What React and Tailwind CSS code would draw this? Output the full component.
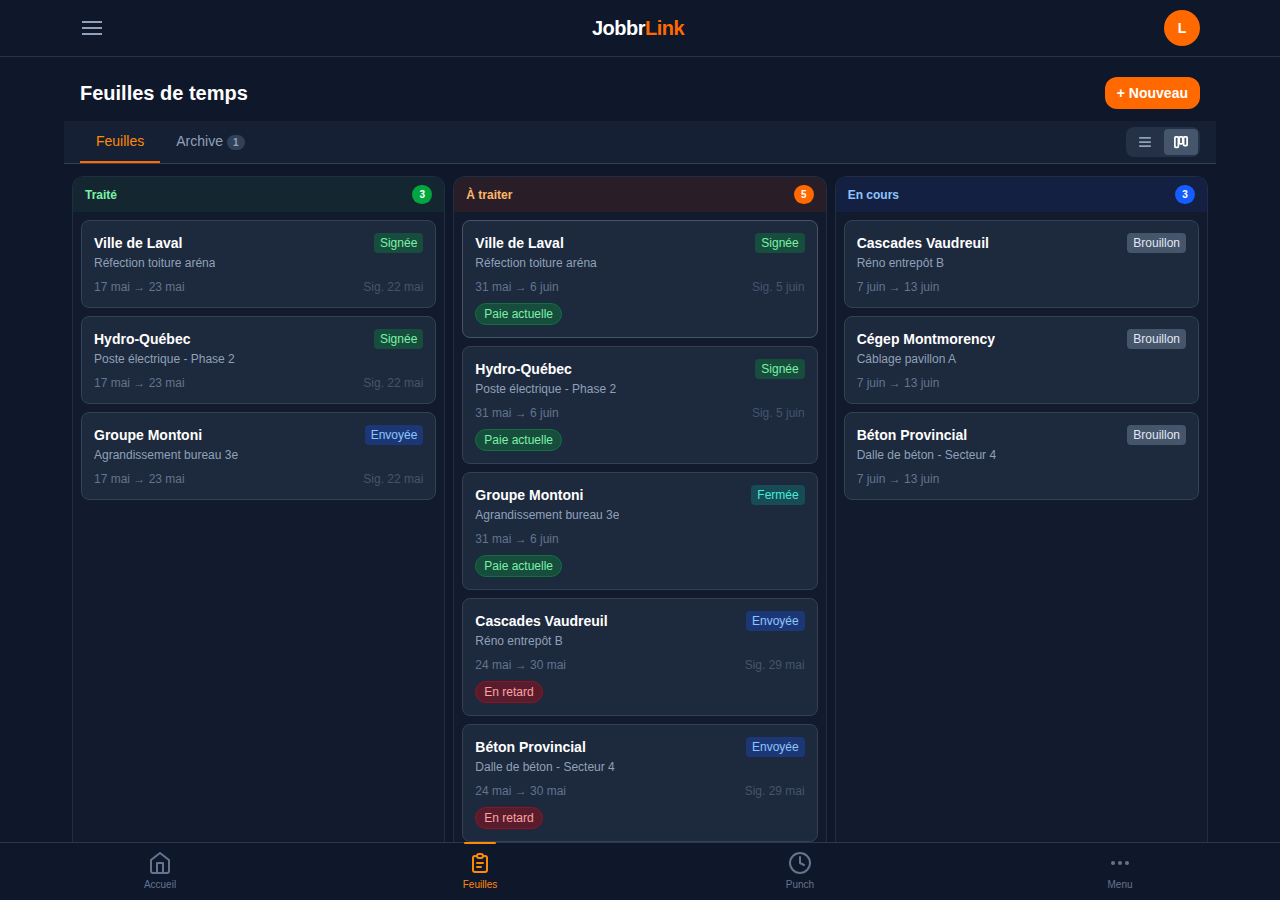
import React, { useState } from "react";

const badgeStyles = {
  Signée: "bg-[#174d3c] text-green-300",
  Envoyée: "bg-[#1c3775] text-blue-300",
  Fermée: "bg-[#174b55] text-teal-300",
  Brouillon: "bg-slate-600 text-slate-200",
};

const tagStyles = {
  "Paie actuelle": "bg-[#174d3c] border-[#0f7040] text-green-300",
  "En retard": "bg-[#581c2d] border-[#8f1420] text-red-300",
};

const columns = [
  {
    title: "Traité",
    header: "bg-[#142730] text-green-300",
    count: "bg-green-600",
    cards: [
      { client: "Ville de Laval", job: "Réfection toiture aréna", dates: "17 mai → 23 mai", status: "Signée", signed: "Sig. 22 mai" },
      { client: "Hydro-Québec", job: "Poste électrique - Phase 2", dates: "17 mai → 23 mai", status: "Signée", signed: "Sig. 22 mai" },
      { client: "Groupe Montoni", job: "Agrandissement bureau 3e", dates: "17 mai → 23 mai", status: "Envoyée", signed: "Sig. 22 mai" },
    ],
  },
  {
    title: "À traiter",
    header: "bg-[#291e27] text-orange-300",
    count: "bg-[#ff6900]",
    cards: [
      { client: "Ville de Laval", job: "Réfection toiture aréna", dates: "31 mai → 6 juin", status: "Signée", signed: "Sig. 5 juin", tag: "Paie actuelle", active: true },
      { client: "Hydro-Québec", job: "Poste électrique - Phase 2", dates: "31 mai → 6 juin", status: "Signée", signed: "Sig. 5 juin", tag: "Paie actuelle" },
      { client: "Groupe Montoni", job: "Agrandissement bureau 3e", dates: "31 mai → 6 juin", status: "Fermée", tag: "Paie actuelle" },
      { client: "Cascades Vaudreuil", job: "Réno entrepôt B", dates: "24 mai → 30 mai", status: "Envoyée", signed: "Sig. 29 mai", tag: "En retard" },
      { client: "Béton Provincial", job: "Dalle de béton - Secteur 4", dates: "24 mai → 30 mai", status: "Envoyée", signed: "Sig. 29 mai", tag: "En retard" },
    ],
  },
  {
    title: "En cours",
    header: "bg-[#142042] text-blue-300",
    count: "bg-blue-600",
    cards: [
      { client: "Cascades Vaudreuil", job: "Réno entrepôt B", dates: "7 juin → 13 juin", status: "Brouillon" },
      { client: "Cégep Montmorency", job: "Câblage pavillon A", dates: "7 juin → 13 juin", status: "Brouillon" },
      { client: "Béton Provincial", job: "Dalle de béton - Secteur 4", dates: "7 juin → 13 juin", status: "Brouillon" },
    ],
  },
];

const navItems = [
  {
    label: "Accueil",
    icon: (
      <svg className="w-6 h-6" viewBox="0 0 24 24" fill="none" stroke="currentColor" strokeWidth="2" strokeLinecap="round" strokeLinejoin="round">
        <path d="M3 9l9-7 9 7v11a2 2 0 01-2 2H5a2 2 0 01-2-2z" />
        <path d="M9 22V12h6v10" />
      </svg>
    ),
  },
  {
    label: "Feuilles",
    icon: (
      <svg className="w-6 h-6" viewBox="0 0 24 24" fill="none" stroke="currentColor" strokeWidth="2" strokeLinecap="round" strokeLinejoin="round">
        <path d="M9 5H7a2 2 0 00-2 2v12a2 2 0 002 2h10a2 2 0 002-2V7a2 2 0 00-2-2h-2" />
        <path d="M9 5a2 2 0 002 2h2a2 2 0 002-2 2 2 0 00-2-2h-2a2 2 0 00-2 2z" />
        <path d="M9 12h6M9 16h4" />
      </svg>
    ),
  },
  {
    label: "Punch",
    icon: (
      <svg className="w-6 h-6" viewBox="0 0 24 24" fill="none" stroke="currentColor" strokeWidth="2" strokeLinecap="round" strokeLinejoin="round">
        <circle cx="12" cy="12" r="10" />
        <path d="M12 6v6l4 2" />
      </svg>
    ),
  },
  {
    label: "Menu",
    icon: (
      <svg className="w-6 h-6" viewBox="0 0 24 24" fill="currentColor">
        <circle cx="5" cy="12" r="2" />
        <circle cx="12" cy="12" r="2" />
        <circle cx="19" cy="12" r="2" />
      </svg>
    ),
  },
];

const Card = ({ card }) => (
  <div
    className={`shrink-0 rounded-lg border bg-slate-800 p-3 ${
      card.active ? "border-slate-600" : "border-slate-700"
    }`}
  >
    <div className="flex items-start justify-between gap-2">
      <div className="min-w-0">
        <p className="truncate text-sm font-semibold text-white">{card.client}</p>
        <p className="truncate text-xs leading-5 text-slate-400">{card.job}</p>
      </div>
      <span className={`shrink-0 rounded px-1.5 py-0.5 text-xs ${badgeStyles[card.status]}`}>
        {card.status}
      </span>
    </div>
    <div className="mt-1.5 flex items-center justify-between text-xs">
      <span className="text-slate-500">{card.dates}</span>
      {card.signed && <span className="text-slate-600">{card.signed}</span>}
    </div>
    {card.tag && (
      <div className="mt-2 flex">
        <span className={`rounded-full border px-2 py-0.5 text-xs ${tagStyles[card.tag]}`}>
          {card.tag}
        </span>
      </div>
    )}
  </div>
);

const App = () => {
  const [page, setPage] = useState("Feuilles");
  const [tab, setTab] = useState("feuilles");
  const [view, setView] = useState("board");

  return (
    <div className="flex h-screen flex-col overflow-hidden bg-slate-900 font-['Liberation_Sans',Arial,sans-serif] text-white">
      {/* top bar */}
      <header className="shrink-0 border-b border-[#263348]">
        <div className="mx-auto flex h-14 max-w-6xl items-center justify-between px-4">
          <button aria-label="Ouvrir le menu" className="flex w-8 text-slate-400">
            <svg className="h-6 w-6" viewBox="0 0 24 24" fill="none" stroke="currentColor" strokeWidth="2">
              <path d="M2 6h20M2 12h20M2 18h20" />
            </svg>
          </button>
          <span className="text-xl font-bold tracking-tight">
            Jobbr<span className="text-[#ff6900]">Link</span>
          </span>
          <button className="h-9 w-9 rounded-full bg-[#ff6900] text-sm font-bold">L</button>
        </div>
      </header>

      <main className="mx-auto flex min-h-0 w-full max-w-6xl flex-1 flex-col">
        <div className="flex h-16 shrink-0 items-center justify-between px-4 pt-2">
          <h1 className="text-xl font-bold">Feuilles de temps</h1>
          <button className="rounded-xl bg-[#ff6900] px-3 py-1.5 text-sm font-semibold">
            + Nouveau
          </button>
        </div>

        {/* tabs + view switch */}
        <div className="flex shrink-0 items-center justify-between border-b border-slate-700 bg-slate-800/50 px-4">
          <div className="flex text-sm">
            <button
              onClick={() => setTab("feuilles")}
              className={`border-b-2 px-4 py-2.5 ${
                tab === "feuilles" ? "border-[#ff6900] text-[#ff8904]" : "border-transparent text-slate-400"
              }`}
            >
              Feuilles
            </button>
            <button
              onClick={() => setTab("archive")}
              className={`border-b-2 px-4 py-2.5 ${
                tab === "archive" ? "border-[#ff6900] text-[#ff8904]" : "border-transparent text-slate-400"
              }`}
            >
              Archive
              <span className="ml-1 rounded-full bg-slate-700 px-1.5 py-0.5 text-[10px] font-bold">1</span>
            </button>
          </div>
          <div className="flex gap-0.5 rounded-lg bg-slate-700/50 p-0.5">
            <button
              aria-label="Vue liste"
              onClick={() => setView("list")}
              className={`rounded px-2.5 py-1.5 ${
                view === "list" ? "bg-slate-600 text-white" : "text-slate-400"
              }`}
            >
              <svg className="h-3.5 w-3.5" viewBox="0 0 24 24" fill="none" stroke="currentColor" strokeWidth="3">
                <path d="M2 5h20M2 12h20M2 19h20" />
              </svg>
            </button>
            <button
              aria-label="Vue tableau"
              onClick={() => setView("board")}
              className={`rounded px-2.5 py-1.5 ${
                view === "board" ? "bg-slate-600 text-white" : "text-slate-400"
              }`}
            >
              <svg className="h-3.5 w-3.5" viewBox="0 0 24 24" fill="none" stroke="currentColor" strokeWidth="3">
                <rect x="1.5" y="3" width="6" height="18" rx="1.5" />
                <rect x="9" y="3" width="6" height="12" rx="1.5" />
                <rect x="16.5" y="3" width="6" height="15" rx="1.5" />
              </svg>
            </button>
          </div>
        </div>

        {/* board */}
        <div className="grid min-h-0 flex-1 grid-cols-3 gap-2 overflow-hidden px-2 pt-3">
          {columns.map((col) => (
            <section
              key={col.title}
              className="flex min-h-0 flex-col overflow-hidden rounded-t-xl border border-b-0 border-slate-700/50 bg-slate-800/20"
            >
              <div className={`flex shrink-0 items-center justify-between px-3 py-2 ${col.header}`}>
                <h2 className="text-xs font-bold">{col.title}</h2>
                <span
                  className={`min-w-5 rounded-full px-1.5 py-0.5 text-center text-[10px] leading-[15px] font-bold text-white ${col.count}`}
                >
                  {col.cards.length}
                </span>
              </div>
              <div className="flex min-h-0 flex-col gap-2 overflow-hidden p-2">
                {col.cards.map((card) => (
                  <Card key={card.client} card={card} />
                ))}
              </div>
            </section>
          ))}
        </div>
      </main>

      {/* bottom navigation */}
      <nav className="grid shrink-0 grid-cols-4 border-t border-[#2a384c] pb-1">
        {navItems.map((item) => (
          <button
            key={item.label}
            onClick={() => setPage(item.label)}
            className={`relative flex flex-col items-center gap-0.5 pt-2 pb-1 text-[10px] leading-[15px] ${
              page === item.label ? "text-[#ff8904]" : "text-slate-500"
            }`}
          >
            {page === item.label && (
              <span className="absolute -top-px h-0.5 w-8 rounded-full bg-[#ff8904]"></span>
            )}
            {item.icon}
            <span>{item.label}</span>
          </button>
        ))}
      </nav>
    </div>
  );
};

export default App;
